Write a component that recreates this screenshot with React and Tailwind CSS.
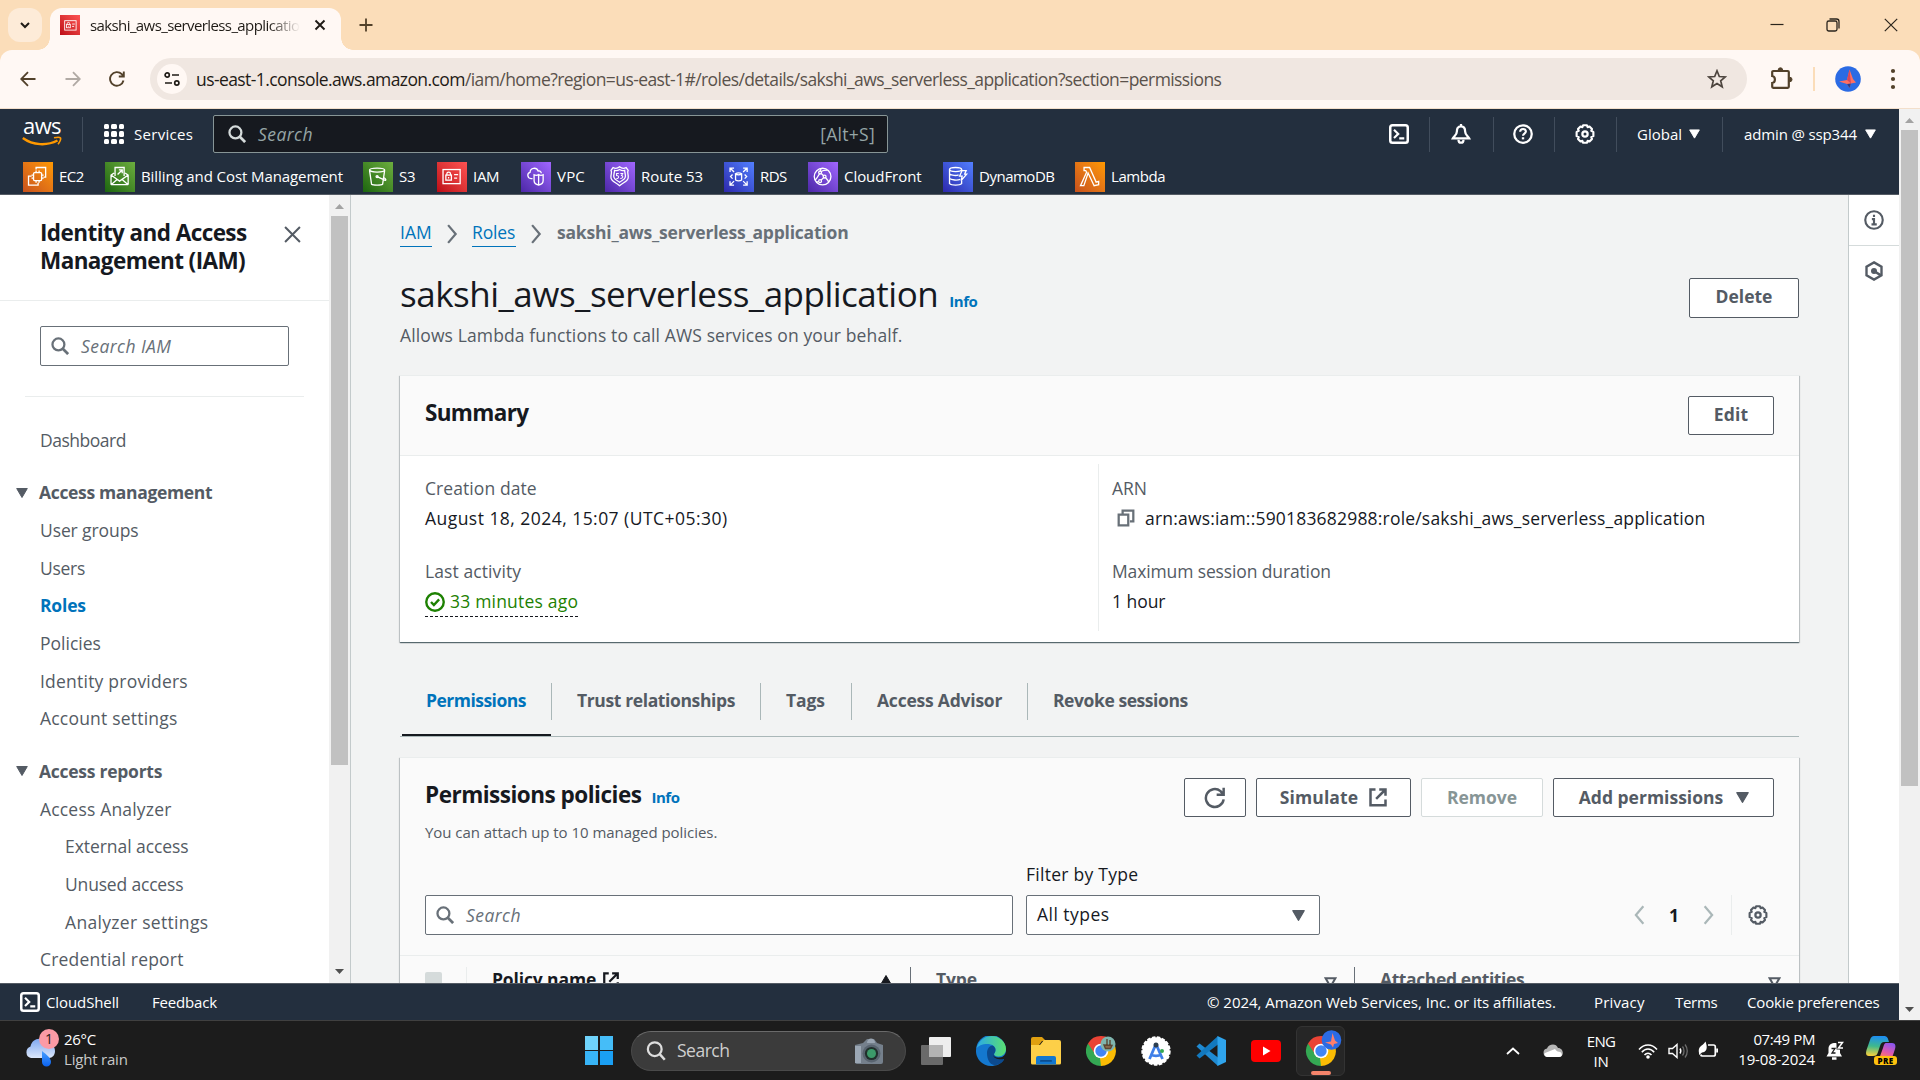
import React from "react";

/* ---------- shared glyphs ---------- */

function Svg({ box = "0 0 16 16", className = "", children }) {
  return (
    <svg viewBox={box} className={`shrink-0 ${className}`} fill="none" stroke="currentColor" strokeWidth="2">
      {children}
    </svg>
  );
}

const SearchGlyph = ({ className }) => (
  <Svg className={className}>
    <circle cx="6.6" cy="6.6" r="5.3" />
    <path d="M10.5 10.5 15.2 15.2" strokeWidth="2.4" />
  </Svg>
);

const CaretDown = ({ className }) => (
  <Svg box="0 0 12 10" className={className}>
    <path d="M0.7 0.5h10.6L6 9.5z" fill="currentColor" stroke="currentColor" strokeWidth="1" strokeLinejoin="round" />
  </Svg>
);

const GearGlyph = ({ className }) => (
  <Svg className={className}>
    <path
      d="M6.500 1h3l.6 1.500 1.500-.5 2 2-.6 1.500 1.700.8v3.400l-1.700.8.6 1.500-2 2-1.500-.5L9.500 15h-3l-.6-1.500-1.500.5-2-2 .6-1.500-1.700-.8V6.300L3 5.500 2.400 4l2-2 1.500.5z"
      strokeWidth="1.700"
      strokeLinejoin="round"
    />
    <circle cx="8" cy="8" r="2.100" strokeWidth="1.800" />
  </Svg>
);

const TerminalGlyph = ({ className }) => (
  <Svg className={className}>
    <rect x="1" y="1" width="14" height="14" rx="1.8" />
    <path d="M4 4.600 7.400 7.900 4 11.200M8.200 11.500h4" strokeWidth="1.7" />
  </Svg>
);

const ExternalGlyph = ({ className }) => (
  <Svg className={className}>
    <path d="M6 2H2v12.500h12V10M9 2h5v5M13.600 2.400 6.500 9.500" />
  </Svg>
);

const ChevronRight = ({ className }) => (
  <Svg box="0 0 10 18" className={className}>
    <path d="M1.500 1 8.300 9 1.500 17" />
  </Svg>
);

const ScrollArrow = ({ up, className }) => (
  <Svg box="0 0 9 5" className={className}>
    <path d={up ? "M0 5 4.500 0 9 5z" : "M0 0h9L4.500 5z"} fill="currentColor" stroke="none" />
  </Svg>
);

/* ---------- service icons ---------- */

const serviceArt = {
  EC2: (
    <>
      <rect x="8.500" y="8.500" width="8" height="8" rx="1" />
      <path d="M11 6.500v2M14 6.500v2M11 16.500v2M14 16.500v2M6.500 11h2M6.500 14h2M16.500 11h2M16.500 14h2M11 5.500V3.500h9.500V13h-2M6.500 12H3.500v9H13v-2.500" />
    </>
  ),
  Billing: (
    <>
      <path d="M8 12V3.500h9V12M4 20.500V11l3-2M21 20.500V11l-3-2M4 11l8.500 6L21 11M4 20.500h17M4 20.500l6-5M21 20.500l-6-5" />
      <path d="M10.500 10.500 15 6M11.800 5.800h3.300v3.300" />
    </>
  ),
  S3: (
    <>
      <ellipse cx="12" cy="6" rx="7.500" ry="2" />
      <path d="M4.500 6.300 6.500 20c1.500 1.300 9.500 1.300 11 0l2-13.700M12 12.500l7.500 3.500c2 .6 1.300-1.500-1-2.600" />
      <circle cx="12" cy="12.500" r="1" />
    </>
  ),
  IAM: (
    <>
      <rect x="4" y="5.500" width="17" height="14" />
      <rect x="6.800" y="11" width="5.500" height="5" />
      <path d="M7.800 11V9.800a1.800 1.800 0 0 1 3.600 0V11M15 10.500h4M15 14h3M9.500 13v1.500" />
    </>
  ),
  VPC: (
    <>
      <path d="M9.500 14.500H8c-3.600-.3-4.500-5.200-1-6.200C7.200 3.500 13.500 2.800 15 7c2.200-.5 3 .8 3.200 2.200" />
      <path d="M15.500 10.500c1.500 1 3 1 4.500.2v5.800c0 2-2 4-4.500 4.500-2.500-.5-4.500-2.500-4.500-4.500v-5.800c1.500.8 3 .8 4.500-.2zM15.500 10.500V21" />
    </>
  ),
  Route53: (
    <>
      <path d="M12.500 2.800c2 1.700 5 1.600 6.500.7l2 2.800c-1.500 2.500.8 4.200 0 7.700-.8 3.500-5 4.500-8.500 7.500-3.500-3-7.700-4-8.500-7.500-.8-3.500 1.500-5.200 0-7.700l2-2.800c1.500.9 4.500 1 6.500-.7z" />
      <path d="M12.500 5.500c1.700 1.100 3.700 1.300 5 .8 0 2.700 1.500 4.700.5 7.200-.7 2-3.500 3-5.500 4.700-2-1.700-4.800-2.700-5.500-4.700-1-2.500.5-4.500.5-7.200 1.300.5 3.300.3 5-.8z" />
      <path d="M11.700 9.500H9.500v2c2.500-.3 2.800 3.200-.2 2.900M13.300 9.500h2.300l-1.200 2c2.200.3 1.400 3-1.200 2.900" strokeWidth="1" />
    </>
  ),
  RDS: (
    <>
      <path d="M4 8V4h4M4 4l4 4M21 8V4h-4M21 4l-4 4M4 17v4h4M4 21l4-4M21 17v4h-4M21 21l-4-4" />
      <path d="M9.500 9.800v6c1.500 1.200 4.500 1.200 6 0v-6c-1.500-1.200-4.500-1.200-6 0c1.500 1.200 4.500 1.200 6 0M6.500 10.500 4.500 12.500l2 2M18.500 10.500l2 2-2 2" />
    </>
  ),
  CloudFront: (
    <>
      <circle cx="12.500" cy="12.500" r="8.300" />
      <circle cx="10" cy="8.500" r="1.400" />
      <circle cx="14.500" cy="12.500" r="1.400" />
      <circle cx="10" cy="17" r="1.400" />
      <path d="M11.200 9.400 13.500 11.600M13.500 13.600 11 16M9.500 10c-2 2-2 4-4.500 6M11 7.500c2-1.500 4-1.500 6-1.500M15.500 13.500c1 1.500 2.500 2.500 3 4.500M8.500 17.500c-1 0-2 .3-2.500.5M11 4.500 10 7" />
    </>
  ),
  DynamoDB: (
    <>
      <ellipse cx="10.500" cy="5.500" rx="6" ry="2" />
      <path d="M4.500 5.500v14c2 2 10 2 12 0v-3M4.500 10c2 1.600 7 1.800 9 .8M4.500 14.500c2 1.600 8 1.800 10.500.8M16.500 5.500v1" />
      <path d="M17 6.500h4l-1.500 3.500H21.500L16 16.500l1-4.500H14.500z" />
    </>
  ),
  Lambda: <path d="M7 3.500h5.500l6.500 14.500 2.500-.8v3.300l-4.500 1L11 9 6.800 21.500H3.500L9.500 8.200 8.700 6.500H7z" />,
};

function ServiceTile({ art, tone, className = "size-[30px]" }) {
  return (
    <span className={`flex shrink-0 items-center justify-center bg-gradient-to-tr ${tone} ${className}`}>
      <svg viewBox="0 0 25 25" className="size-[84%]" fill="none" stroke="white" strokeWidth="1.300">
        {serviceArt[art]}
      </svg>
    </span>
  );
}

const ORANGE = "from-[#c8511b] to-[#ff9900]";
const GREEN = "from-[#1b660f] to-[#6cae3e]";
const RED = "from-[#bd0816] to-[#ff5252]";
const PURPLE = "from-[#4d27a8] to-[#a166ff]";
const BLUE = "from-[#2e27ad] to-[#527fff]";

const favourites = [
  { label: "EC2", art: "EC2", tone: ORANGE, width: "w-[82px]", track: "tracking-[-0.500px]" },
  { label: "Billing and Cost Management", art: "Billing", tone: GREEN, width: "w-[258px]", track: "tracking-[-0.090px]" },
  { label: "S3", art: "S3", tone: GREEN, width: "w-[74px]", track: "tracking-[-0.300px]" },
  { label: "IAM", art: "IAM", tone: RED, width: "w-[84px]", track: "tracking-[-0.300px]" },
  { label: "VPC", art: "VPC", tone: PURPLE, width: "w-[84px]", track: "tracking-[0.200px]" },
  { label: "Route 53", art: "Route53", tone: PURPLE, width: "w-[119px]", track: "tracking-[-0.040px]" },
  { label: "RDS", art: "RDS", tone: BLUE, width: "w-[84px]", track: "tracking-[-0.600px]" },
  { label: "CloudFront", art: "CloudFront", tone: PURPLE, width: "w-[135px]", track: "tracking-[-0.050px]" },
  { label: "DynamoDB", art: "DynamoDB", tone: BLUE, width: "w-[132px]", track: "tracking-[-0.490px]" },
  { label: "Lambda", art: "Lambda", tone: ORANGE, width: "w-[100px]", track: "tracking-[-0.450px]" },
];

/* ---------- browser chrome ---------- */

function TabStrip() {
  return (
    <div className="flex h-[50px] shrink-0 bg-[#fbddb9]">
      <div className="flex w-[50px] items-start pt-2 pl-2">
        <div className="flex h-[34px] w-[34px] items-center justify-center rounded-xl bg-[#fdebd8] text-[#1f1b16]">
          <Svg box="0 0 12 12" className="size-3">
            <path d="M2 4l4 4 4-4" />
          </Svg>
        </div>
      </div>
      <div className="relative mt-2 flex h-[42px] w-[291px] items-center rounded-t-xl bg-[#fff8f4] pb-2 pl-[10px]">
        <span className="absolute bottom-0 -left-3 size-3 bg-[radial-gradient(circle_at_0_0,transparent_11.500px,#fff8f4_12px)]" />
        <span className="absolute -right-3 bottom-0 size-3 bg-[radial-gradient(circle_at_100%_0,transparent_11.500px,#fff8f4_12px)]" />
        <ServiceTile art="IAM" tone={RED} className="size-5" />
        <span className="ml-[10px] w-[210px] overflow-hidden [mask-image:linear-gradient(to_right,black_85%,transparent)] text-[15px] tracking-[-0.600px] whitespace-nowrap text-[#1f1b16]">
          sakshi_aws_serverless_application
        </span>
        <Svg box="0 0 12 12" className="ml-[14px] size-3 text-[#1f1b16]">
          <path d="M1.500 1.500l9 9M10.500 1.500l-9 9" strokeWidth="1.900" />
        </Svg>
      </div>
      <Svg box="0 0 14 14" className="mt-[18px] ml-[18px] size-[14px] text-[#52412a]">
        <path d="M7 0.500v13M0.500 7h13" strokeWidth="1.800" />
      </Svg>
      <div className="ml-auto flex text-[#2a241c]">
        <Svg box="0 0 14 14" className="mt-[18px] mr-[42px] size-[14px]">
          <path d="M0.500 6.500h13" strokeWidth="1.200" />
        </Svg>
        <Svg box="0 0 14 14" className="mt-[18px] mr-[44px] size-[14px]">
          <rect x="1" y="3" width="10" height="10" rx="1.800" strokeWidth="1.300" />
          <path d="M3.500 1h7c1.500 0 2.500 1 2.500 2.500v7" strokeWidth="1.300" />
        </Svg>
        <Svg box="0 0 14 14" className="mt-[18px] mr-[22px] size-[14px]">
          <path d="M0.800 0.800l12.400 12.400M13.200 0.800 0.800 13.200" strokeWidth="1.200" />
        </Svg>
      </div>
    </div>
  );
}

function AddressBar() {
  return (
    <div className="shrink-0 bg-[#fbddb9]">
      <div className="flex h-[59px] items-center rounded-t-xl border-b border-[#f3dfcb] bg-[#fff8f4]">
        <Svg box="0 0 16 16" className="ml-5 size-4 text-[#52412a]">
          <path d="M15.500 8H1.500M8 1.200 1.200 8 8 14.800" strokeWidth="1.800" />
        </Svg>
        <Svg box="0 0 16 16" className="ml-[29px] size-4 text-[#b1aaa4]">
          <path d="M0.500 8h14M8 1.200 14.800 8 8 14.800" strokeWidth="1.800" />
        </Svg>
        <Svg box="0 0 16 16" className="ml-[28px] size-4 text-[#52412a]">
          <path d="M14.500 9.500A6.800 6.800 0 1 1 12.800 3.200L14.300 5M14.800 0.500V5.500H9.800" strokeWidth="1.900" />
        </Svg>
        <div className="ml-[25px] flex h-[42px] w-[1597px] items-center rounded-full bg-[#f0e7e1] pr-5 pl-[7px]">
          <span className="flex size-[30px] items-center justify-center rounded-full bg-[#fff8f4] text-[#1f1b16]">
            <Svg className="size-4">
              <circle cx="3.200" cy="4" r="2.100" strokeWidth="1.700" />
              <path d="M8 4h7M1 12h7" strokeWidth="1.700" />
              <circle cx="12.800" cy="12" r="2.100" strokeWidth="1.700" />
            </Svg>
          </span>
          <span className="mt-px ml-[9px] text-[17.500px] tracking-[-0.580px] whitespace-nowrap text-[#5a524b]">
            <span className="text-[#1f1b16]">us-east-1.console.aws.amazon.com</span>
            /iam/home?region=us-east-1#/roles/details/sakshi_aws_serverless_application?section=permissions
          </span>
          <Svg box="0 0 20 20" className="ml-auto size-5 text-[#4d453e]">
            <path d="M10 1.800l2.300 5.700 6 .4-4.600 3.900 1.500 6-5.200-3.300-5.200 3.300 1.500-6L1.700 7.900l6-.4z" strokeWidth="1.700" />
          </Svg>
        </div>
        <Svg box="0 0 24 24" className="-mt-[2px] ml-[23px] size-6 text-[#52412a]">
          <path d="M3.200 5h14.600a1 1 0 0 1 1 1v14.800a1 1 0 0 1-1 1H3.200a1 1 0 0 1-1-1V17c3.600-.5 3.600-6.500 0-7V6a1 1 0 0 1 1-1z" strokeWidth="2.200" />
          <path d="M8.200 4a2.200 2.200 0 0 1 4.400 0zM19.800 11.300a2.200 2.200 0 0 1 0 4.400z" fill="currentColor" strokeWidth="1" />
        </Svg>
        <span className="ml-[19px] h-6 w-0.5 bg-[#fbddb9]" />
        <svg viewBox="0 0 26 26" className="ml-5 size-[26px]">
          <circle cx="13" cy="13" r="12.800" fill="#2b6be4" />
          <path d="M14.500 3.500 12 14 4 15.500l8 2.500 2.500 4 1.500-4.500 5-1-3-3.500z" fill="#ff6f61" />
          <path d="M14.500 3.500 16 17.500l-4-3.500z" fill="#d9485a" />
          <path d="M12 18l2.500 4 1.500-4.500z" fill="#263f8f" />
        </svg>
        <svg viewBox="0 0 6 24" className="ml-[29px] h-6 w-[6px]" fill="#52412a">
          <circle cx="3" cy="4" r="2.100" />
          <circle cx="3" cy="12" r="2.100" />
          <circle cx="3" cy="20" r="2.100" />
        </svg>
      </div>
    </div>
  );
}

/* ---------- AWS header ---------- */

const Sep = ({ className = "" }) => <span className={`h-[35px] w-px shrink-0 bg-[#414d5c] ${className}`} />;

function AwsHeader() {
  return (
    <header className="h-[86px] shrink-0 border-b border-[#545b64] bg-[#232f3e] text-white">
      <div className="flex h-[50px] items-center">
        <div className="ml-[22px] flex w-10 flex-col items-center">
          <span className="-mt-[6px] h-[22px] text-[22px] leading-[22px] font-medium tracking-[-0.600px]">aws</span>
          <svg viewBox="0 0 40 12" className="h-3 w-10" fill="none" stroke="#ff9900">
            <path d="M0.800 2C11 9.500 25 10 35.500 4.500" strokeWidth="2.400" />
            <path d="M32 1.800c3.500-.8 6-.6 6.500.2.500.8-.4 4-2.500 6.200" strokeWidth="1.600" />
          </svg>
        </div>
        <Sep className="ml-[20px]" />
        <div className="ml-[21px] grid size-5 grid-cols-3 gap-[2px]">
          {Array.from({ length: 9 }, (_, i) => (
            <span key={i} className="rounded-[1.500px] bg-white" />
          ))}
        </div>
        <span className="ml-[10px] w-[79px] text-[15px] tracking-[0.310px]">Services</span>
        <div className="flex h-[38px] w-[675px] items-center rounded-[2px] border border-[#879596] bg-[#16191f] pr-[12px] pl-[14px]">
          <SearchGlyph className="size-[18px] text-[#d5dbdb]" />
          <span className="ml-[12px] text-[17.500px] tracking-[0.430px] text-[#95a5a6] italic">Search</span>
          <span className="ml-auto text-[17.500px] tracking-[0.300px] text-[#95a5a6]">[Alt+S]</span>
        </div>
        <TerminalGlyph className="ml-[501px] size-5" />
        <Sep className="ml-5" />
        <Svg className="ml-[21px] size-5">
          <path d="M8 1.800c-2.600 0-3.300 2-3.300 4.200C4.700 8.700 2.500 9.700 1.500 11.500h13c-1-1.800-3.200-2.800-3.200-5.500 0-2.200-.7-4.200-3.300-4.200zM8 0v2" strokeWidth="1.800" />
          <path d="M6 12.500c0 3.300 4 3.300 4 0" strokeWidth="1.800" />
        </Svg>
        <Sep className="ml-[22px]" />
        <Svg className="ml-[19px] size-5">
          <circle cx="8" cy="8" r="7" strokeWidth="1.800" />
          <path d="M5.700 6.200C5.800 3.200 10.400 3.300 10.300 6c-.1 1.600-2.300 1.700-2.300 3.300" strokeWidth="1.700" />
          <path d="M8 10.600v1.700" strokeWidth="1.900" />
        </Svg>
        <Sep className="ml-[21px]" />
        <GearGlyph className="ml-5 size-5" />
        <Sep className="ml-[21px]" />
        <span className="ml-5 w-[52px] text-[15px]">Global</span>
        <CaretDown className="h-[10px] w-[11px]" />
        <Sep className="ml-[22px]" />
        <span className="ml-[21px] w-[121px] text-[15px] tracking-[-0.140px] whitespace-nowrap">admin @ ssp344</span>
        <CaretDown className="h-[10px] w-[11px]" />
      </div>
      <div className="flex h-[35px] items-center pl-[23px]">
        {favourites.map((f) => (
          <div key={f.label} className={`flex shrink-0 items-center gap-[6px] ${f.width}`}>
            <ServiceTile art={f.art} tone={f.tone} />
            <span className={`text-[15px] whitespace-nowrap ${f.track}`}>{f.label}</span>
          </div>
        ))}
      </div>
    </header>
  );
}

/* ---------- side navigation ---------- */

const NavLink = ({ className = "", children }) => (
  <div className={`flex h-[37.600px] items-center pl-10 text-[17.500px] whitespace-nowrap ${className}`}>{children}</div>
);

const NavGroup = ({ children, className = "" }) => (
  <div className={`flex h-[38px] items-center pl-4 text-[17.500px] font-bold ${className}`}>
    <CaretDown className="h-[10px] w-3" />
    <span className="ml-[11px]">{children}</span>
  </div>
);

function SideNav() {
  return (
    <nav className="flex w-[351px] shrink-0 overflow-hidden border-r border-[#c3cacb] bg-white text-[#545b64]">
      <div className="w-[329px] shrink-0">
        <div className="flex h-[106px] justify-between border-b border-[#eaeded] pt-6 pr-[28px] pl-10">
          <h2 className="w-[230px] text-[22.500px] leading-[28px] font-bold tracking-[-0.580px] text-[#16191f]">
            Identity and Access
            <br />
            Management (IAM)
          </h2>
          <Svg className="mt-[7px] size-[17px]">
            <path d="M1 1l14 14M15 1 1 15" strokeWidth="1.900" />
          </Svg>
        </div>
        <div className="mt-[25px] ml-10 flex h-10 w-[249px] items-center rounded-[2px] border border-[#687078] pl-[10px] text-[#687078]">
          <SearchGlyph className="size-[18px]" />
          <span className="ml-[12px] text-[17.500px] tracking-[0.430px] italic">Search IAM</span>
        </div>
        <div className="mt-[30px] ml-[25px] w-[279px] border-t border-[#eaeded]" />
        <NavLink className="mt-[24px] tracking-[-0.480px]">Dashboard</NavLink>
        <NavGroup className="mt-[15px] tracking-[-0.340px]">Access management</NavGroup>
        <NavLink className="tracking-[-0.100px]">User groups</NavLink>
        <NavLink className="tracking-[-0.300px]">Users</NavLink>
        <NavLink className="font-bold tracking-[-0.200px] text-[#0073bb]">Roles</NavLink>
        <NavLink>Policies</NavLink>
        <NavLink className="tracking-[0.220px]">Identity providers</NavLink>
        <NavLink className="tracking-[0.200px]">Account settings</NavLink>
        <NavGroup className="mt-[15px] tracking-[-0.260px]">Access reports</NavGroup>
        <NavLink className="tracking-[0.180px]">Access Analyzer</NavLink>
        <NavLink className="pl-[65px] tracking-[-0.060px]">External access</NavLink>
        <NavLink className="pl-[65px] tracking-[-0.180px]">Unused access</NavLink>
        <NavLink className="pl-[65px] tracking-[0.310px]">Analyzer settings</NavLink>
        <NavLink className="tracking-[0.200px]">Credential report</NavLink>
      </div>
      <div className="flex w-[21px] shrink-0 flex-col items-center bg-[#f1f1f1]">
        <ScrollArrow up className="mt-[9px] mb-[7px] h-[5px] w-[9px] text-[#a3a3a3]" />
        <div className="h-[549px] w-[17px] bg-[#c1c1c1]" />
        <ScrollArrow className="mt-auto mb-[9px] h-[5px] w-[9px] text-[#505050]" />
      </div>
    </nav>
  );
}

/* ---------- main content ---------- */

const Button = ({ className = "", children }) => (
  <button className={`flex shrink-0 items-center justify-center rounded-[2px] border text-[17.500px] font-bold ${className}`}>
    {children}
  </button>
);

const Card = ({ className = "", children }) => (
  <section className={`w-[1399px] border-t border-[#eaeded] shadow-[0_1px_1px_0_rgba(0,28,36,0.500),1px_1px_1px_0_rgba(0,28,36,0.150),-1px_1px_1px_0_rgba(0,28,36,0.150)] ${className}`}>
    {children}
  </section>
);

function Field({ label, track, children }) {
  return (
    <div className="h-[83px]">
      <div className={`h-[30px] text-[17.500px] leading-[30px] ${track}`}>{label}</div>
      <div className="flex h-[30px] items-center text-[17.500px] whitespace-nowrap text-[#16191f]">{children}</div>
    </div>
  );
}

function Summary() {
  return (
    <Card className="mt-[29px] h-[267px] bg-white">
      <div className="flex h-[80px] items-center justify-between border-b border-[#eaeded] bg-[#fafafa] pr-[25px] pl-[25px]">
        <h2 className="pb-[6px] text-[22.500px] font-bold tracking-[-0.660px] text-[#16191f]">Summary</h2>
        <Button className="h-[39px] w-[86px] border-[#545b64] bg-white pb-[2px] tracking-[0.200px]">Edit</Button>
      </div>
      <div className="flex pt-[8px]">
        <div className="h-[167px] w-[699px] border-r border-[#eaeded] pt-[9px] pl-[25px]">
          <Field label="Creation date" track="tracking-[0.080px]">
            <span className="tracking-[0.460px]">August 18, 2024, 15:07 (UTC+05:30)</span>
          </Field>
          <Field label="Last activity" track="tracking-[0.090px]">
            <span className="mt-[2px] flex h-[30px] items-center border-b border-dashed border-[#16191f] text-[#1d8102]">
              <Svg className="size-5">
                <circle cx="8" cy="8" r="7" strokeWidth="1.900" />
                <path d="M4.800 8l2.300 2.400 4.200-4.500" strokeWidth="1.900" />
              </Svg>
              <span className="ml-[5px] tracking-[0.200px]">33 minutes ago</span>
            </span>
          </Field>
        </div>
        <div className="pt-[9px] pl-[13px]">
          <Field label="ARN" track="">
            <Svg className="mr-[10px] ml-[5px] size-[18px] text-[#687078]">
              <path d="M5 4.500V1.500h9.500V11h-3M1.500 5h8.500v9.500H1.500z" strokeWidth="2" />
            </Svg>
            <span className="tracking-[0.190px]">arn:aws:iam::590183682988:role/sakshi_aws_serverless_application</span>
          </Field>
          <Field label="Maximum session duration" track="tracking-[-0.130px]">
            <span className="tracking-[-0.040px]">1 hour</span>
          </Field>
        </div>
      </div>
    </Card>
  );
}

const tabs = [
  { label: "Permissions", width: "w-[152px]", track: "tracking-[-0.520px]", active: true },
  { label: "Trust relationships", width: "w-[209px]", track: "tracking-[-0.380px]" },
  { label: "Tags", width: "w-[91px]", track: "tracking-[-0.100px]" },
  { label: "Access Advisor", width: "w-[176px]", track: "tracking-[-0.220px]" },
  { label: "Revoke sessions", width: "w-[188px]", track: "tracking-[-0.430px]", last: true },
];

function Tabs() {
  return (
    <div className="mt-[31px] flex h-[64px] w-[1399px] border-b border-[#aab7b8] text-[17.500px] font-bold">
      {tabs.map((t) => (
        <div key={t.label} className={`flex flex-col pt-[10px] ${t.width}`}>
          <div className={`flex h-[37px] items-center pb-[3px] whitespace-nowrap ${t.track} ${t.last ? "" : "border-r border-[#aab7b8]"} ${t.active ? "pl-[26px] text-[#0073bb]" : "pl-[25px]"}`}>
            {t.label}
          </div>
          {t.active && <div className="mt-[14px] ml-[2px] h-[2px] w-[149px] bg-[#16191f]" />}
        </div>
      ))}
    </div>
  );
}

const SortGlyph = ({ className }) => (
  <Svg box="0 0 12 10" className={className}>
    <path d="M1.500 1h9L6 9z" strokeWidth="1.900" />
  </Svg>
);

function Policies() {
  return (
    <Card className="mt-5 h-[300px] bg-[#fafafa]">
      <div className="flex h-[137px] pt-5 pr-[25px] pl-[25px]">
        <div className="grow">
          <div className="flex h-[34px] items-baseline">
            <h2 className="text-[22.500px] leading-[34px] font-bold tracking-[-0.500px] text-[#16191f]">Permissions policies</h2>
            <span className="ml-[10px] text-[15px] font-bold tracking-[-0.470px] text-[#0073bb]">Info</span>
          </div>
          <p className="mt-[10px] text-[15px] leading-5 tracking-[-0.040px]">You can attach up to 10 managed policies.</p>
        </div>
        <div className="flex h-10 items-start gap-[10px]">
          <Button className="h-[39px] w-[62px] border-[#545b64] bg-white">
            <Svg className="size-[22px]">
              <path d="M14.300 9A6.500 6.500 0 1 1 12 3l2 2.200M14.300 0.500V5.600H9.200" strokeWidth="1.800" />
            </Svg>
          </Button>
          <Button className="h-[39px] w-[155px] border-[#545b64] bg-white pb-[1px] pl-[1px]">
            <span className="tracking-[0.120px]">Simulate</span>
            <ExternalGlyph className="ml-[10px] size-5" />
          </Button>
          <Button className="h-[39px] w-[122px] border-[#d5dbdb] bg-white pb-[1px] text-[#879596]">Remove</Button>
          <Button className="h-[39px] w-[221px] border-[#545b64] bg-white pb-[1px] pl-[1px]">
            Add permissions
            <CaretDown className="ml-[13px] h-[11px] w-[13px]" />
          </Button>
        </div>
      </div>
      <div className="flex h-[61px] items-start border-b border-[#eaeded] pl-[25px]">
        <div className="flex h-10 w-[588px] items-center rounded-[2px] border border-[#687078] bg-white pl-[10px] text-[#687078]">
          <SearchGlyph className="size-[18px]" />
          <span className="ml-[12px] text-[17.500px] tracking-[0.430px] italic">Search</span>
        </div>
        <div className="-mt-9 ml-[13px] w-[294px] text-[17.500px] text-[#16191f]">
          <div className="h-9 leading-[31px] tracking-[0.260px]">Filter by Type</div>
          <div className="flex h-10 items-center justify-between rounded-[2px] border border-[#687078] bg-white pr-[14px] pl-[10px]">
            <span className="pb-[1px] tracking-[0.460px]">All types</span>
            <CaretDown className="h-[11px] w-[13px] text-[#545b64]" />
          </div>
        </div>
        <div className="ml-[314px] flex h-10 items-center text-[#aab7b8]">
          <ChevronRight className="h-[20px] w-[11px] rotate-180" />
          <span className="w-[58px] text-center text-[17.500px] font-bold text-[#16191f]">1</span>
          <ChevronRight className="h-[20px] w-[11px]" />
          <span className="ml-[17px] h-10 w-px bg-[#eaeded]" />
          <GearGlyph className="ml-[16px] size-5 text-[#545b64]" />
        </div>
      </div>
      <div className="flex pl-[25px] text-[17.500px] font-bold">
        <span className="mt-[16px] size-[17px] rounded-[2px] bg-[#d5dbdb]" />
        <div className="mt-[11px] ml-[24px] flex h-9 w-[445px] border-r border-l border-[#687078] border-l-[#eaeded] pl-[25px] text-[#16191f]">
          <span className="leading-[24px] tracking-[-0.130px]">Policy name</span>
          <ExternalGlyph className="mt-[4px] ml-[6px] size-[18px]" />
          <CaretDown className="mt-[8px] mr-[18px] ml-auto h-[10px] w-3 rotate-180" />
        </div>
        <div className="mt-[11px] flex h-9 w-[444px] border-r border-[#687078] pl-[25px]">
          <span className="leading-[25px] tracking-[-0.170px]">Type</span>
          <SortGlyph className="mt-[10px] mr-[17px] ml-auto h-[11px] w-[13px]" />
        </div>
        <div className="mt-[11px] flex h-9 w-[444px] pl-[25px]">
          <span className="leading-[25px] tracking-[-0.400px]">Attached entities</span>
          <SortGlyph className="mt-[10px] mr-[18px] ml-auto h-[11px] w-[13px]" />
        </div>
      </div>
    </Card>
  );
}

function RolePage() {
  return (
    <main className="h-[788px] grow overflow-hidden bg-[#f2f3f3] pt-[25px] pl-[49px] text-[#545b64]">
      <div className="flex h-[27px] items-center text-[17.500px]">
        <span className="h-[27px] w-[32px] border-b border-[#0073bb] leading-[25px] text-[#0073bb]">IAM</span>
        <ChevronRight className="mx-[14px] h-[20px] w-[12px] text-[#687078]" />
        <span className="h-[27px] w-[44px] border-b border-[#0073bb] leading-[25px] tracking-[-0.150px] text-[#0073bb]">Roles</span>
        <ChevronRight className="mx-[14px] h-[20px] w-[12px] text-[#687078]" />
        <span className="pb-[2px] pl-[1px] font-bold tracking-[-0.200px] text-[#687078]">sakshi_aws_serverless_application</span>
      </div>
      <div className="mt-[24px] flex h-[75px] w-[1399px] justify-between">
        <div>
          <div className="flex h-[45px] items-baseline">
            <h1 className="text-[35px] leading-[46px] tracking-[-0.500px] text-[#16191f]">sakshi_aws_serverless_application</h1>
            <span className="ml-[11px] text-[15px] font-bold tracking-[-0.400px] text-[#0073bb]">Info</span>
          </div>
          <p className="mt-[7px] text-[17.500px] leading-[25px] tracking-[0.120px]">
            Allows Lambda functions to call AWS services on your behalf.
          </p>
        </div>
        <Button className="mt-[7px] h-10 w-[110px] border-[#545b64] bg-white pb-[3px]">Delete</Button>
      </div>
      <Summary />
      <Tabs />
      <Policies />
    </main>
  );
}

function ToolRail() {
  return (
    <aside className="flex w-[51px] shrink-0 flex-col border-l border-[#c3cacb] bg-white text-[#545b64]">
      <div className="flex h-[51px] items-center justify-center border-b border-[#d5dbdb]">
        <Svg className="size-5">
          <circle cx="8" cy="8" r="7" strokeWidth="1.700" />
          <path d="M8 3.800v1.700M6.300 7.300H8v4.200M6 11.500h4.200" strokeWidth="1.700" />
        </Svg>
      </div>
      <div className="flex h-[49px] items-center justify-center">
        <Svg className="size-5">
          <path d="M8 1.100 14 4.500v7L8 14.900 2 11.500v-7z" strokeWidth="1.900" />
          <circle cx="8" cy="8" r="2.400" fill="currentColor" stroke="none" />
          <path d="M8 8l5.500 3.500" />
        </Svg>
      </div>
    </aside>
  );
}

function ConsoleFooter() {
  return (
    <footer className="flex h-[37px] shrink-0 items-center border-t border-[#545b64] bg-[#232f3e] pl-5 text-[15px] whitespace-nowrap text-white">
      <TerminalGlyph className="size-5" />
      <span className="ml-[6px] w-[106px] tracking-[-0.100px]">CloudShell</span>
      <span className="tracking-[-0.170px]">Feedback</span>
      <span className="ml-auto w-[387px] tracking-[-0.020px]">© 2024, Amazon Web Services, Inc. or its affiliates.</span>
      <span className="w-[81px] tracking-[0.160px]">Privacy</span>
      <span className="w-[72px] tracking-[-0.300px]">Terms</span>
      <span className="w-[152px] tracking-[-0.150px]">Cookie preferences</span>
    </footer>
  );
}

/* ---------- Windows taskbar ---------- */

function ChromeLogo({ className, children }) {
  return (
    <svg viewBox="0 0 30 30" className={className}>
      <path d="M15 15 15 30A15 15 0 0 1 2 7.500z" fill="#34a853" />
      <path d="M15 8h13.200A15 15 0 0 1 15 30l-1-8z" fill="#fbbc04" />
      <path d="M2 7.500A15 15 0 0 1 28.200 8H15L9 18z" fill="#ea4335" />
      <circle cx="15" cy="15" r="7.300" fill="white" />
      <circle cx="15" cy="15" r="5.700" fill="#4285f4" />
      {children}
    </svg>
  );
}

const Slot = ({ children, className = "" }) => <div className={`flex h-[50px] w-[55px] shrink-0 items-center justify-center ${className}`}>{children}</div>;

function Taskbar() {
  return (
    <div className="flex h-[60px] shrink-0 items-center border-t border-[#404040] bg-[#1c1c1c] text-[15px] whitespace-nowrap text-white">
      <div className="-mt-1 flex w-[585px] items-center pl-[25px]">
        <div className="relative">
          <svg viewBox="0 0 32 32" className="mt-[4px] size-8">
            <defs>
              <linearGradient id="cloud" x1="0" y1="0" x2="0" y2="1">
                <stop offset="0" stopColor="#7fa8f0" />
                <stop offset="1" stopColor="#dbe7fb" />
              </linearGradient>
              <linearGradient id="drop" x1="0" y1="0" x2="0" y2="1">
                <stop offset="0" stopColor="#4aa0ff" />
                <stop offset="1" stopColor="#0a62f0" />
              </linearGradient>
            </defs>
            <path d="M6 23a6 6 0 0 1-.5-11.500C7 3 18 1 21 8.500c6-.5 9 3 9 7.500 0 4-2.500 7-6 7z" fill="url(#cloud)" />
            <path d="M17 16c5 4 9 7 9 11a4.500 4.500 0 0 1-9 0z" fill="url(#drop)" />
          </svg>
          <span className="absolute -top-[2px] left-[14px] flex size-5 items-center justify-center rounded-full bg-[#fb9aa5] text-[14px] text-[#2b1a1a]">1</span>
        </div>
        <div className="ml-[7px] leading-5">
          <div className="tracking-[-0.300px]">26°C</div>
          <div className="tracking-[-0.200px] text-[#c8c8c8]">Light rain</div>
        </div>
      </div>
      <div className="grid h-[29px] w-7 grid-cols-2 gap-[1.500px]">
        <span className="bg-[#6fd3fb]" />
        <span className="bg-[#45bdf8]" />
        <span className="bg-[#38b4f6]" />
        <span className="bg-[#1a9ff3]" />
      </div>
      <div className="ml-[18px] flex h-10 w-[275px] items-center rounded-full border border-[#4a4a4a] border-t-[#6a6a6a] bg-[#3b3b3b] pr-[20px] pl-[14px]">
        <Svg className="size-5 text-[#dddddd]">
          <circle cx="7" cy="6.500" r="5.500" strokeWidth="1.800" />
          <path d="M11 10.500 15 15" />
        </Svg>
        <span className="ml-[11px] text-[17.500px] tracking-[-0.500px] text-[#cfcfcf]">Search</span>
        <svg viewBox="0 0 32 28" className="ml-auto h-7 w-8">
          <path d="M2 8 10 6l4-4h7l3 4 6 2v17a2 2 0 0 1-2 2H4a2 2 0 0 1-2-2z" fill="#75808c" />
          <path d="M14 6c0-6 8-6 8 0" fill="#9aa5b2" />
          <rect x="2" y="9" width="6" height="17" fill="#9ba7b4" />
          <circle cx="18.500" cy="16.500" r="9" fill="#596470" />
          <circle cx="18.500" cy="16.500" r="6.600" fill="#20302c" />
          <circle cx="18.500" cy="16.500" r="4.500" fill="#3c9b6a" />
        </svg>
      </div>
      <Slot className="ml-[2px]">
        <svg viewBox="0 0 30 28" className="h-7 w-[30px]">
          <rect x="8" y="0" width="22" height="20" rx="1" fill="#eeeeee" />
          <rect x="0" y="8" width="22" height="20" rx="1" fill="#6a6a6a" />
          <rect x="8" y="8" width="14" height="12" fill="#b3b3b3" />
        </svg>
      </Slot>
      <Slot>
        <svg viewBox="0 0 30 30" className="size-[30px]">
          <defs>
            <linearGradient id="edgeA" x1="0" y1="0" x2="1" y2="0">
              <stop offset="0" stopColor="#2aa9e8" />
              <stop offset="1" stopColor="#5be070" />
            </linearGradient>
          </defs>
          <path d="M0 14a15 15 0 0 1 30 0c0 3-1 5-3 6.500l1 3C25 28 20 30 15 30A15 15 0 0 1 0 14z" fill="#1478cf" />
          <path d="M0.500 12.500C2.500 4.500 9 0 15.500 0 24 0 30 6.500 30 13c0 4.500-3.500 7.500-7.500 7.500-3 0-4.500-1-4.500-2.200 0-1 1.500-1.800 1.500-4.300 0-4-4-6-8-6C6 8 2 10 .5 12.500z" fill="url(#edgeA)" />
          <path d="M11 17c0-4.500 3-7.500 5.500-7.500 2 1 3 2.500 3 4.500 0 2.500-1.500 3.300-1.500 4.300 0 2 3 3.700 9.500 3.200l.5 2C26 27.500 21 29.500 18 29c-4.500-.5-7-6-7-12z" fill="#0c4a8e" />
          <path d="M17 19c1.500 3.500 7.500 3.500 11.500.5L30 23h-2c-5 .8-10 0-11-4z" fill="#1c1c1c" />
        </svg>
      </Slot>
      <Slot>
        <svg viewBox="0 0 30 28" className="mt-[1px] h-7 w-[30px]">
          <path d="M0 2a2 2 0 0 1 2-2h9l4 4h-4l-3 4H0z" fill="#e0a010" />
          <path d="M0 8h9l4-5h15a2 2 0 0 1 2 2v21a1.500 1.500 0 0 1-1.500 1.500h-27A1.500 1.500 0 0 1 0 26z" fill="#fdcf48" />
          <path d="M5 27.500V21a2 2 0 0 1 2-2h16a2 2 0 0 1 2 2v6.500z" fill="#1277cf" />
          <rect x="9" y="23" width="12" height="1.800" rx="0.900" fill="#0b4d8f" />
        </svg>
      </Slot>
      <Slot>
        <ChromeLogo className="size-[30px]">
          <circle cx="22" cy="8" r="7.500" fill="#7fb5ae" />
          <path d="M18 9l8 .5-1.500 3h-5zM21 3v6M24 4v5" stroke="#5d4632" strokeWidth="1.400" fill="#8a6b4c" />
        </ChromeLogo>
      </Slot>
      <Slot>
        <svg viewBox="0 0 30 30" className="size-[30px]">
          <circle cx="15" cy="15" r="13.700" fill="white" stroke="white" strokeWidth="2" strokeDasharray="3.500 1.500" />
          <path d="M15 8 8.500 23M15 8l6.500 15M9.500 18c3 2.500 8 2.500 11 0" fill="none" stroke="#3f7fe8" strokeWidth="2.800" />
          <circle cx="15" cy="9" r="2.500" fill="#2c3e50" />
          <circle cx="21" cy="15" r="2" fill="#34a853" />
        </svg>
      </Slot>
      <Slot>
        <svg viewBox="0 0 30 30" className="size-[30px]">
          <path d="M3.500 7.500 22 21.500V30L0.500 10.500z" fill="#1f8ad2" />
          <path d="M3.500 22.500 22 8.500V0L0.500 19.500z" fill="#1279bf" />
          <path d="M21.500 0 30 4v22l-8.500 4z" fill="#2fa4ec" />
        </svg>
      </Slot>
      <Slot>
        <svg viewBox="0 0 30 22" className="h-[22px] w-[30px]">
          <rect width="30" height="22" rx="4" fill="#ff0000" />
          <path d="M12 6.500v9l7.500-4.500z" fill="white" />
        </svg>
      </Slot>
      <div className="ml-[3px] flex h-[50px] w-[49px] shrink-0 flex-col items-center rounded-md border border-[#333333] bg-[#262626]">
        <ChromeLogo className="mt-[9px] size-[30px] overflow-visible">
          <circle cx="25.500" cy="4" r="9.800" fill="#2b6be4" />
          <path d="M26.500-3 25 5.500l-6 1 6 2 2 3 1-3.500 4-1-3-2.500z" fill="#ff7f6b" />
        </ChromeLogo>
        <span className="mt-auto h-1 w-5 rounded-full bg-[#f4846b]" />
      </div>

      <div className="ml-[161px] flex items-center">
        <Svg box="0 0 14 8" className="h-2 w-[14px]">
          <path d="M1 7l6-5.500L13 7" strokeWidth="1.800" />
        </Svg>
        <svg viewBox="0 0 20 13" className="ml-[23px] h-[13px] w-5">
          <path d="M4.500 13A4.300 4.300 0 0 1 4 4.500C5.500 0 13-1.500 15 4c6 0 6.500 9 1 9z" fill="#b5b5b5" />
          <path d="M4.500 13C1.500 13 .5 10 2 9l10-4c1.500 2 2 2.500 4 2.800C19 8 20.500 13 16 13z" fill="#ffffff" />
        </svg>
        <div className="ml-[21px] w-[34px] text-center leading-5">
          <div className="tracking-[-0.700px]">ENG</div>
          <div className="tracking-[-0.300px]">IN</div>
        </div>
        <Svg box="0 0 20 16" className="ml-5 h-4 w-5">
          <path d="M1 6.500c5-6 13-6 18 0M3.800 9.300c3.500-4.300 8.900-4.300 12.400 0M6.500 12c2-2.500 5-2.500 7 0" strokeWidth="1.500" />
          <circle cx="10" cy="14" r="1.800" fill="currentColor" stroke="none" />
        </Svg>
        <Svg box="0 0 20 16" className="ml-[10px] h-4 w-5">
          <path d="M1 5.500h3.500L9 1.500v13l-4.500-4H1z" strokeWidth="1.400" />
          <path d="M12 5.500c1 1.500 1 3.500 0 5" strokeWidth="1.400" />
          <path d="M14.500 3.500c2 2.500 2 6.500 0 9M17 1.500c3 3.700 3 9.300 0 13" stroke="#6c6c6c" strokeWidth="1.300" />
        </Svg>
        <Svg box="0 0 20 17" className="-mt-[2px] ml-[10px] h-[17px] w-5">
          <path d="M10 4h5.500a1.800 1.800 0 0 1 1.800 1.800v7.400a1.800 1.800 0 0 1-1.800 1.800H4.500a1.800 1.800 0 0 1-1.800-1.500" strokeWidth="1.700" />
          <path d="M19.200 7.500v4" />
          <path d="M1 12C-.5 5 5 5 7.500.5 9.500 6 9.500 10.500 4 11.500L1 14z" fill="currentColor" stroke="none" />
        </Svg>
        <div className="-mt-[3px] ml-[17px] w-[80px] text-right leading-5">
          <div className="tracking-[-0.380px]">07:49 PM</div>
          <div className="tracking-[-0.150px]">19-08-2024</div>
        </div>
        <Svg box="0 0 18 20" className="ml-[11px] h-5 w-[18px]">
          <path d="M8 2C4 2.500 2.500 5 2.500 8v4L.5 15.500h15.500l-2-3.500V9L10.500 2z" fill="currentColor" stroke="none" />
          <path d="M6 17.500h4.500" strokeWidth="2.500" />
          <path d="M10.500 0v8.500H18V0z" fill="#1c1c1c" stroke="none" />
          <path d="M12 1.500h4.500L12.500 7H17" strokeWidth="1.500" />
          <path d="M5.500 7.500h3.500l-3 4.500h3.500" stroke="#1c1c1c" strokeWidth="1.300" />
        </Svg>
        <div className="relative ml-[22px] h-[29px] w-[30px]">
          <svg viewBox="0 0 30 29" className="h-[29px] w-[30px]">
            <defs>
              <linearGradient id="cpA" x1="0.300" y1="0" x2="0.200" y2="1">
                <stop offset="0" stopColor="#1e8ff0" />
                <stop offset="0.500" stopColor="#3fb98c" />
                <stop offset="1" stopColor="#ffd23a" />
              </linearGradient>
              <linearGradient id="cpB" x1="0.700" y1="0" x2="0.300" y2="1">
                <stop offset="0" stopColor="#8a56f0" />
                <stop offset="0.600" stopColor="#e45aa8" />
                <stop offset="1" stopColor="#ff8a4c" />
              </linearGradient>
            </defs>
            <path d="M8 0h10c3 0 4 2 5 6h-5c-2 0-3 1-4 4l-2 6c-1 3-2 4-5 4H3c-3 0-3.500-2-2.500-6L4 4c1-3 2-4 4-4z" fill="url(#cpA)" />
            <path d="M20 7h6c3.500 0 4 3 3 6l-2 6c-1 3-2 4-5 4h-9l4-11c1-3.500 1.500-5 3-5z" fill="url(#cpB)" />
          </svg>
          <span className="absolute -right-[1px] bottom-0 flex h-[9px] w-[23px] items-center justify-center rounded-[3px] bg-[#ffc20e] text-[8px] leading-none font-extrabold tracking-[0.300px] text-black">PRE</span>
        </div>
      </div>
    </div>
  );
}

export default function App() {
  return (
    <div className="flex h-[1080px] w-[1920px] flex-col overflow-hidden bg-white font-['Open_Sans',sans-serif]">
      <TabStrip />
      <AddressBar />
      <div className="flex h-[911px] shrink-0">
        <div className="flex w-[1899px] shrink-0 flex-col">
          <AwsHeader />
          <div className="flex h-[788px] shrink-0">
            <SideNav />
            <RolePage />
            <ToolRail />
          </div>
          <ConsoleFooter />
        </div>
        <div className="flex w-[21px] flex-col items-center bg-[#f1f1f1]">
          <ScrollArrow up className="mt-[9px] mb-[7px] h-[5px] w-[9px] text-[#a3a3a3]" />
          <div className="h-[656px] w-[17px] bg-[#c1c1c1]" />
          <ScrollArrow className="mt-auto mb-[8px] h-[5px] w-[9px] text-[#505050]" />
        </div>
      </div>
      <Taskbar />
    </div>
  );
}
